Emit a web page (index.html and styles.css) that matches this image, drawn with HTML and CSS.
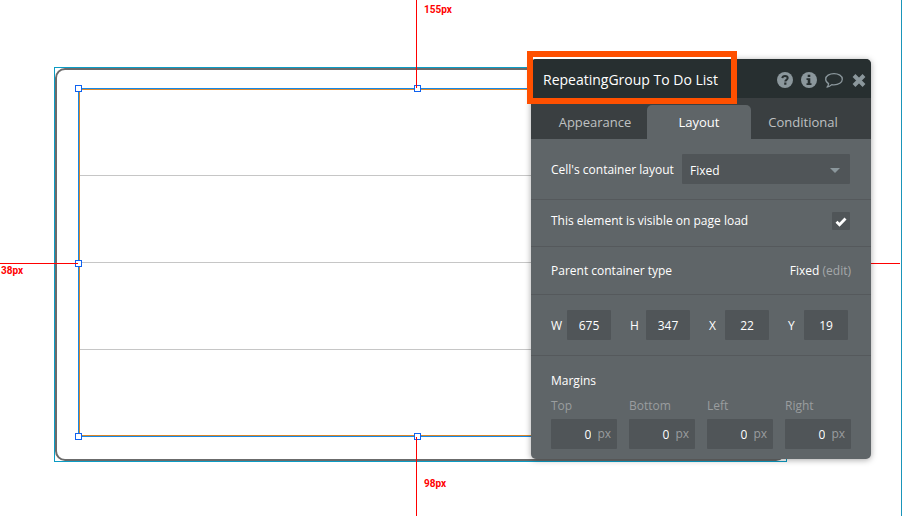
FILE: index.html
```html
<!DOCTYPE html>
<html lang="en">
<head>
  <meta charset="UTF-8">
  <meta name="viewport" content="width=device-width, initial-scale=1.0">
  <title>RepeatingGroup To Do List</title>
  <link rel="stylesheet" href="styles.css">
</head>
<body>
  <main class="canvas">
    <div class="group">
      <div class="group-border"></div>
    </div>

    <div class="repeating-group">
      <div class="cell"></div>
      <div class="cell"></div>
      <div class="cell"></div>
      <div class="cell"></div>
    </div>

    <!-- Resize handles -->
    <span class="handle top-left"></span>
    <span class="handle top"></span>
    <span class="handle left"></span>
    <span class="handle bottom-left"></span>
    <span class="handle bottom"></span>

    <!-- Distance guides -->
    <div class="guide guide-top"></div>
    <div class="guide guide-bottom"></div>
    <div class="guide guide-left"></div>
    <div class="guide guide-right"></div>
    <span class="distance distance-top">155px</span>
    <span class="distance distance-left">38px</span>
    <span class="distance distance-bottom">98px</span>

    <section class="panel">
      <header class="panel-header">
        <h1>RepeatingGroup To Do List</h1>
        <div class="actions">
          <button type="button" aria-label="Help">
            <svg width="16" height="16" viewBox="0 0 16 16">
              <circle cx="8" cy="8" r="8" fill="currentColor"/>
              <path d="M5.3 6.2C5.5 4.6 6.5 3.9 8 3.9c1.6 0 2.700.9 2.7 2.2C10.7 7.9 8.3 7.8 8.3 9.5" fill="none" stroke="#272f30" stroke-width="2"/>
              <path d="M7.200 10.600h2.200v2.100H7.200z" fill="#272f30"/>
            </svg>
          </button>
          <button type="button" aria-label="Info">
            <svg width="16" height="16" viewBox="0 0 16 16">
              <circle cx="8" cy="8" r="8" fill="currentColor"/>
              <path d="M6.700 2.800h2.600v2.200H6.700zM5.500 6.200h3.800v5h1.200v1.800h-5v-1.800h1.200V8H5.500z" fill="#272f30"/>
            </svg>
          </button>
          <button type="button" aria-label="Comment">
            <svg width="18" height="16" viewBox="0 0 18 16">
              <path d="M9 1.600c4.500 0 8.300 2.300 8.300 5.600S13.500 12.800 9 12.800c-.8 0-1.500-.1-2.200-.2-1.400 1.400-2.900 2.300-4.800 2.600 1-.9 1.500-2.100 1.600-3.600C1.800 10.600.7 9 .7 7.200.7 3.900 4.500 1.600 9 1.600z" fill="none" stroke="currentColor" stroke-width="1.300" stroke-linejoin="round"/>
            </svg>
          </button>
          <button type="button" aria-label="Close">
            <svg width="14" height="16" viewBox="0 0 14 16">
              <path d="M2 3.500l10 10M12 3.500l-10 10" stroke="currentColor" stroke-width="4"/>
            </svg>
          </button>
        </div>
      </header>

      <nav class="tabs">
        <button type="button" class="tab">Appearance</button>
        <button type="button" class="tab active">Layout</button>
        <button type="button" class="tab">Conditional</button>
      </nav>

      <div class="row row-select">
        <label for="cellLayout">Cell's container layout</label>
        <div class="select">
          <select id="cellLayout">
            <option>Fixed</option>
          </select>
        </div>
      </div>

      <div class="row row-visible">
        <label for="visible">This element is visible on page load</label>
        <span class="checkbox">
          <input type="checkbox" id="visible" checked>
          <svg width="12" height="10" viewBox="0 0 12 10">
            <path d="M1.500 4.800l3 3 6-6.300" fill="none" stroke="#fff" stroke-width="2.800"/>
          </svg>
        </span>
      </div>

      <div class="row row-parent">
        <span>Parent container type</span>
        <span>Fixed <a href="#">(edit)</a></span>
      </div>

      <div class="row row-size">
        <div class="size"><label for="w">W</label><input type="text" id="w" value="675"></div>
        <div class="size"><label for="h">H</label><input type="text" id="h" value="347"></div>
        <div class="size"><label for="x">X</label><input type="text" id="x" value="22"></div>
        <div class="size"><label for="y">Y</label><input type="text" id="y" value="19"></div>
      </div>

      <div class="row-margins">
        <h2>Margins</h2>
        <div class="margins">
          <div class="margin">
            <label for="mTop">Top</label>
            <div class="field"><input type="text" id="mTop" value="0"><span>px</span></div>
          </div>
          <div class="margin">
            <label for="mBottom">Bottom</label>
            <div class="field"><input type="text" id="mBottom" value="0"><span>px</span></div>
          </div>
          <div class="margin">
            <label for="mLeft">Left</label>
            <div class="field"><input type="text" id="mLeft" value="0"><span>px</span></div>
          </div>
          <div class="margin">
            <label for="mRight">Right</label>
            <div class="field"><input type="text" id="mRight" value="0"><span>px</span></div>
          </div>
        </div>
      </div>
    </section>

    <div class="highlight"></div>
  </main>
</body>
</html>
```
FILE: styles.css
```css
* {
  box-sizing: border-box;
}

body {
  margin: 0;
  background: #fff;
  font-family: "Open Sans", "Noto Sans", sans-serif;
  font-size: 12px;
  line-height: 16px;
  color: #fff;
}

.canvas {
  position: relative;
  min-height: 100vh;
  margin-right: 1px;
  border-right: 1px solid #1a95ba;
  overflow: hidden;
}

/* Elements placed on the canvas */
.group {
  position: absolute;
  left: 54px;
  top: 67px;
  width: 733px;
  height: 395px;
  border: 1px solid #0b9cc4;
}

.group-border {
  height: 100%;
  border: 2px solid #6b6b6b;
  border-radius: 10px;
}

.repeating-group {
  position: absolute;
  left: 78px;
  top: 88px;
  width: 677px;
  height: 349px;
  display: flex;
  flex-direction: column;
  border: 1px solid #1789e6;
  outline: 1px solid #d9862b;
  outline-offset: -2px;
}

.cell {
  flex: 1;
}

.cell + .cell {
  border-top: 1px solid #c6c6c6;
}

.handle {
  position: absolute;
  width: 7px;
  height: 7px;
  border: 1px solid #0f62f0;
  background: #fff;
}

.top-left { left: 75px; top: 85px; }
.top { left: 414px; top: 85px; }
.left { left: 75px; top: 260px; }
.bottom-left { left: 75px; top: 433px; }
.bottom { left: 414px; top: 433px; }

.guide {
  position: absolute;
  background: #f00;
}

.guide-top { left: 416px; top: 0; width: 1px; height: 88px; }
.guide-bottom { left: 416px; top: 437px; width: 1px; bottom: 0; }
.guide-left { left: 0; top: 263px; width: 78px; height: 1px; }
.guide-right { right: 1px; top: 263px; width: 60px; height: 1px; }

.distance {
  position: absolute;
  font-family: Roboto, sans-serif;
  font-size: 10px;
  line-height: 12px;
  font-weight: bold;
  color: #f00;
}

.distance-top { left: 424px; top: 4px; }
.distance-left { left: 1px; top: 265px; }
.distance-bottom { left: 424px; top: 478px; }

/* Property editor */
.panel {
  position: absolute;
  top: 59px;
  right: 30px;
  width: 340px;
  border-radius: 5px;
  background: #5f6568;
  box-shadow: 0 1px 6px rgba(0, 0, 0, 0.35);
  overflow: hidden;
}

.panel-header {
  display: flex;
  justify-content: space-between;
  align-items: center;
  height: 39px;
  padding: 3px 5px 0 12px;
  background: #272f30;
}

.panel-header h1 {
  margin: 0;
  font-size: 14px;
  font-weight: normal;
  line-height: 20px;
}

.actions {
  display: flex;
  gap: 8px;
}

.actions button {
  display: flex;
  padding: 0;
  border: none;
  background: none;
  color: #8b979c;
  cursor: pointer;
}

.actions button:last-child {
  padding-left: 1px;
}

.tabs {
  display: flex;
  height: 41px;
  padding: 7px 16px 0 12px;
  background: #3a3f41;
}

.tab {
  flex: 1;
  padding: 0;
  border: none;
  border-radius: 5px 5px 0 0;
  background: none;
  font: 13px "Open Sans", "Noto Sans", sans-serif;
  color: #bfc1c2;
  cursor: pointer;
}

.tab.active {
  background: #5f6568;
  color: #fff;
}

.row {
  display: flex;
  justify-content: space-between;
  align-items: center;
  padding: 0 20px;
  border-bottom: 1px solid #55595c;
}

.row-select {
  height: 61px;
}

.row-visible {
  height: 47px;
  padding-bottom: 4px;
}

.row-parent {
  height: 48px;
}

.row-size {
  height: 61px;
  padding-right: 23px;
}

.row-select label,
.row-size label {
  padding-top: 2px;
}

.select {
  position: relative;
  width: 168px;
  margin-right: 1px;
}

.select::after {
  content: "";
  position: absolute;
  right: 10px;
  top: 14px;
  border: 5px solid transparent;
  border-top: 5px solid #8b979c;
  border-bottom: none;
}

select,
input {
  margin: 0;
  border: none;
  border-radius: 1px;
  background: #505558;
  font: 12px "Open Sans", "Noto Sans", sans-serif;
  color: #fff;
}

select {
  width: 100%;
  height: 30px;
  padding: 2px 8px 0;
  appearance: none;
}

.checkbox {
  display: grid;
  place-items: center;
  margin-right: 1px;
}

.checkbox input {
  width: 18px;
  height: 18px;
  appearance: none;
}

.checkbox input,
.checkbox svg {
  grid-area: 1 / 1;
}

.checkbox svg {
  margin-top: 2px;
  pointer-events: none;
}

.row a {
  color: #a5a8aa;
  text-decoration: none;
}

.size {
  display: flex;
  align-items: center;
}

.size label {
  width: 16px;
}

.size input {
  width: 44px;
  height: 30px;
  padding: 0;
  text-align: center;
}

.row-margins {
  padding: 17px 20px 10px;
}

.row-margins h2 {
  margin: 0 0 9px;
  font-size: 12px;
  font-weight: normal;
  line-height: 16px;
}

.margins {
  display: flex;
  gap: 12px;
}

.margin {
  flex: 1;
  min-width: 0;
}

.margin label {
  display: block;
  margin-bottom: 5px;
  color: #9a9d9f;
}

.field {
  display: flex;
  align-items: center;
  padding-right: 6px;
  border-radius: 1px;
  background: #505558;
  color: #9a9d9f;
}

.field input {
  flex: 1;
  min-width: 0;
  height: 30px;
  padding: 0 6px 0 0;
  background: none;
  text-align: right;
}

/* Callout around the element name */
.highlight {
  position: absolute;
  top: 51px;
  right: 164px;
  width: 210px;
  height: 53px;
  border: 6px solid #ff5000;
  box-shadow: inset 0 2px #fff;
}
```
